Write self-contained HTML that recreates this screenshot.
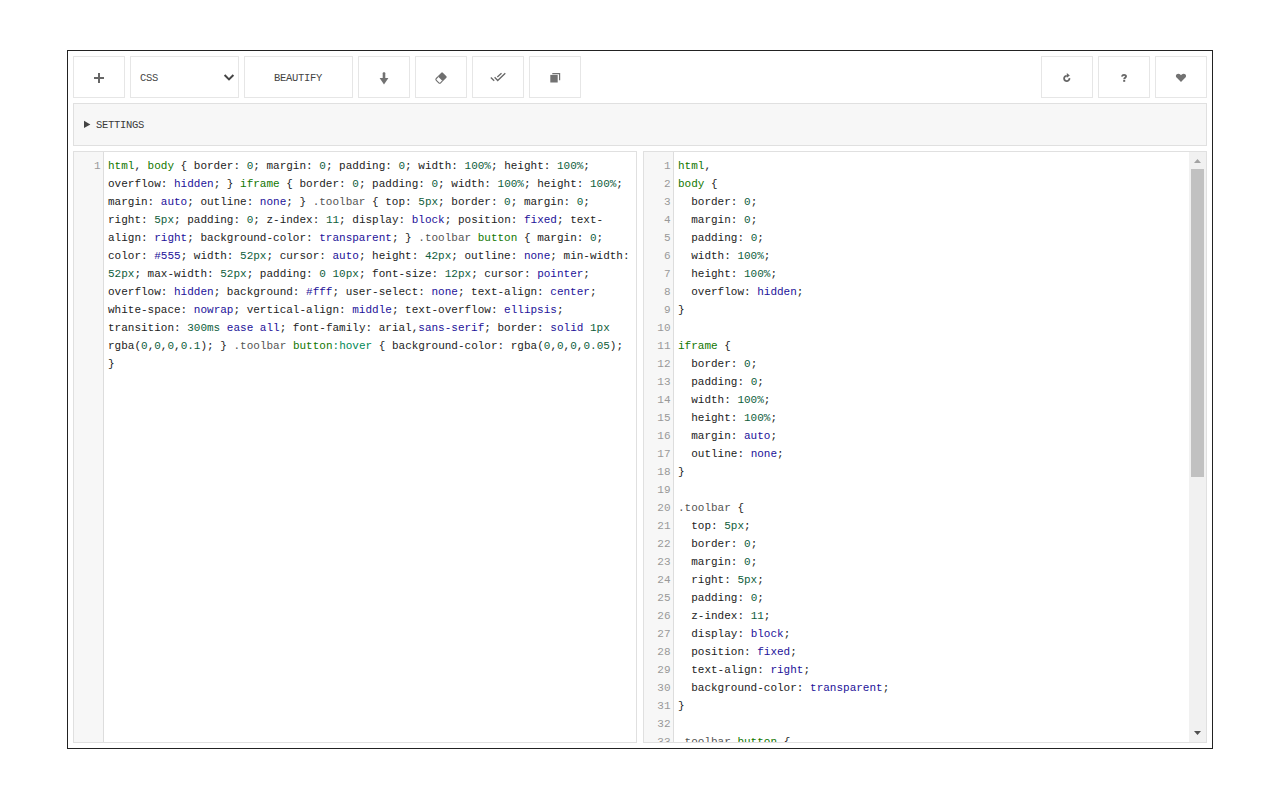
<!DOCTYPE html>
<html><head><meta charset="utf-8">
<style>
html,body{margin:0;padding:0;background:#fff;width:1280px;height:800px;overflow:hidden;position:relative;}
*{box-sizing:border-box;}
.abs{position:absolute;}
#wrap{position:absolute;left:67px;top:50px;width:1146px;height:699px;border:1px solid #222;}
.btn{position:absolute;top:56px;height:42px;border:1px solid #e6e6e6;background:#fff;}
.btxt{position:absolute;font-family:"Liberation Mono",monospace;font-size:10.5px;letter-spacing:-0.3px;color:#444;white-space:pre;line-height:12px;}
#settings{position:absolute;left:73px;top:103px;width:1134px;height:43px;background:#f7f7f7;border:1px solid #e0e0e0;}
.ed{position:absolute;top:151px;width:564px;height:592px;border:1px solid #e0e0e0;background:#fff;overflow:hidden;}
.gut{position:absolute;left:0;top:0;width:30px;height:100%;background:#f7f7f7;border-right:1px solid #ddd;}
.code{position:absolute;font-family:"Liberation Mono",monospace;font-size:11px;line-height:18px;white-space:pre;color:#222;}
.nums{position:absolute;left:0;width:26.5px;text-align:right;font-family:"Liberation Mono",monospace;font-size:11px;line-height:18px;color:#999;}
.ln,.gn{height:18px;}
.t{color:#170}.q{color:#555}.v{color:#085}.n{color:#0f5e3c}.a{color:#219}
#sb{position:absolute;left:545px;top:0;width:17px;height:590px;background:#f1f1f1;}
#thumb{position:absolute;left:2px;top:17px;width:13px;height:308px;background:#c1c1c1;}
svg.ov{position:absolute;left:0;top:0;width:1280px;height:800px;pointer-events:none;}
</style></head><body>
<div id="wrap"></div>
<div class="btn" style="left:73px;width:52px"></div>
<div class="btn" style="left:130px;width:109px"></div>
<div class="btn" style="left:244px;width:109px"></div>
<div class="btn" style="left:358px;width:52px"></div>
<div class="btn" style="left:415px;width:52px"></div>
<div class="btn" style="left:472px;width:52px"></div>
<div class="btn" style="left:529px;width:52px"></div>
<div class="btn" style="left:1041px;width:52px"></div>
<div class="btn" style="left:1098px;width:52px"></div>
<div class="btn" style="left:1155px;width:52px"></div>
<div class="btxt" style="left:140px;top:72px">CSS</div>
<div class="btxt" style="left:274px;top:72px">BEAUTIFY</div>
<div id="settings"></div>
<div class="btxt" style="left:96px;top:119px;color:#3a3a3a">SETTINGS</div>

<div class="ed" style="left:73px">
  <div class="gut"></div>
  <div class="nums" style="top:5px"><div class="gn">1</div></div>
  <div class="code" style="left:34px;top:5px"><div class="ln"><span class="t">html</span>, <span class="t">body</span> { border: <span class="n">0</span>; margin: <span class="n">0</span>; padding: <span class="n">0</span>; width: <span class="n">100%</span>; height: <span class="n">100%</span>;</div><div class="ln">overflow: <span class="a">hidden</span>; } <span class="t">iframe</span> { border: <span class="n">0</span>; padding: <span class="n">0</span>; width: <span class="n">100%</span>; height: <span class="n">100%</span>;</div><div class="ln">margin: <span class="a">auto</span>; outline: <span class="a">none</span>; } <span class="q">.toolbar</span> { top: <span class="n">5px</span>; border: <span class="n">0</span>; margin: <span class="n">0</span>;</div><div class="ln">right: <span class="n">5px</span>; padding: <span class="n">0</span>; z-index: <span class="n">11</span>; display: <span class="a">block</span>; position: <span class="a">fixed</span>; text-</div><div class="ln">align: <span class="a">right</span>; background-color: <span class="a">transparent</span>; } <span class="q">.toolbar</span> <span class="t">button</span> { margin: <span class="n">0</span>;</div><div class="ln">color: <span class="a">#555</span>; width: <span class="n">52px</span>; cursor: <span class="a">auto</span>; height: <span class="n">42px</span>; outline: <span class="a">none</span>; min-width:</div><div class="ln"><span class="n">52px</span>; max-width: <span class="n">52px</span>; padding: <span class="n">0</span> <span class="n">10px</span>; font-size: <span class="n">12px</span>; cursor: <span class="a">pointer</span>;</div><div class="ln">overflow: <span class="a">hidden</span>; background: <span class="a">#fff</span>; user-select: <span class="a">none</span>; text-align: <span class="a">center</span>;</div><div class="ln">white-space: <span class="a">nowrap</span>; vertical-align: <span class="a">middle</span>; text-overflow: <span class="a">ellipsis</span>;</div><div class="ln">transition: <span class="n">300ms</span> <span class="a">ease</span> <span class="a">all</span>; font-family: arial,<span class="a">sans-serif</span>; border: <span class="a">solid</span> <span class="n">1px</span></div><div class="ln">rgba(<span class="n">0</span>,<span class="n">0</span>,<span class="n">0</span>,<span class="n">0.1</span>); } <span class="q">.toolbar</span> <span class="t">button</span><span class="v">:hover</span> { background-color: rgba(<span class="n">0</span>,<span class="n">0</span>,<span class="n">0</span>,<span class="n">0.05</span>);</div><div class="ln">}</div></div>
</div>
<div class="ed" style="left:643px">
  <div class="gut"></div>
  <div class="nums" style="top:5px"><div class="gn">1</div><div class="gn">2</div><div class="gn">3</div><div class="gn">4</div><div class="gn">5</div><div class="gn">6</div><div class="gn">7</div><div class="gn">8</div><div class="gn">9</div><div class="gn">10</div><div class="gn">11</div><div class="gn">12</div><div class="gn">13</div><div class="gn">14</div><div class="gn">15</div><div class="gn">16</div><div class="gn">17</div><div class="gn">18</div><div class="gn">19</div><div class="gn">20</div><div class="gn">21</div><div class="gn">22</div><div class="gn">23</div><div class="gn">24</div><div class="gn">25</div><div class="gn">26</div><div class="gn">27</div><div class="gn">28</div><div class="gn">29</div><div class="gn">30</div><div class="gn">31</div><div class="gn">32</div><div class="gn">33</div><div class="gn">34</div></div>
  <div class="code" style="left:34px;top:5px"><div class="ln"><span class="t">html</span>,</div><div class="ln"><span class="t">body</span> {</div><div class="ln">  border: <span class="n">0</span>;</div><div class="ln">  margin: <span class="n">0</span>;</div><div class="ln">  padding: <span class="n">0</span>;</div><div class="ln">  width: <span class="n">100%</span>;</div><div class="ln">  height: <span class="n">100%</span>;</div><div class="ln">  overflow: <span class="a">hidden</span>;</div><div class="ln">}</div><div class="ln">&nbsp;</div><div class="ln"><span class="t">iframe</span> {</div><div class="ln">  border: <span class="n">0</span>;</div><div class="ln">  padding: <span class="n">0</span>;</div><div class="ln">  width: <span class="n">100%</span>;</div><div class="ln">  height: <span class="n">100%</span>;</div><div class="ln">  margin: <span class="a">auto</span>;</div><div class="ln">  outline: <span class="a">none</span>;</div><div class="ln">}</div><div class="ln">&nbsp;</div><div class="ln"><span class="q">.toolbar</span> {</div><div class="ln">  top: <span class="n">5px</span>;</div><div class="ln">  border: <span class="n">0</span>;</div><div class="ln">  margin: <span class="n">0</span>;</div><div class="ln">  right: <span class="n">5px</span>;</div><div class="ln">  padding: <span class="n">0</span>;</div><div class="ln">  z-index: <span class="n">11</span>;</div><div class="ln">  display: <span class="a">block</span>;</div><div class="ln">  position: <span class="a">fixed</span>;</div><div class="ln">  text-align: <span class="a">right</span>;</div><div class="ln">  background-color: <span class="a">transparent</span>;</div><div class="ln">}</div><div class="ln">&nbsp;</div><div class="ln"><span class="q">.toolbar</span> <span class="t">button</span> {</div><div class="ln">  margin: <span class="n">0</span>;</div></div>
  <div id="sb"><div id="thumb"></div></div>
</div>

<svg class="ov" viewBox="0 0 1280 800">
 <g fill="#666">
  <rect x="94" y="77" width="10" height="2"/>
  <rect x="98" y="73" width="2" height="10"/>
 </g>
 <polyline points="224.6,75 229,79.4 233.4,75" fill="none" stroke="#444" stroke-width="2"/>
 <g fill="#727272">
  <rect x="382.7" y="72.2" width="2.6" height="7" rx="1"/>
  <polygon points="379.6,78.1 388.4,78.1 384,84.4"/>
 </g>
 <g transform="translate(441 78.1) rotate(-45)">
  <path d="M-1,-3.6 H4 Q5.1,-3.6 5.1,-2.5 V2.5 Q5.1,3.6 4,3.6 H-1 Z" fill="#6f6f6f"/>
  <path d="M-1,-3.05 H-3.6 Q-4.9,-3.05 -4.9,-1.8 V1.8 Q-4.9,3.05 -3.6,3.05 H-1" fill="none" stroke="#6f6f6f" stroke-width="1.1"/>
 </g>
 <g fill="none" stroke="#666" stroke-width="1.3">
  <polyline points="490.8,77.5 494.2,80.8"/>
  <polyline points="494.6,77.3 497.7,80.5 505.3,73.2"/>
  <polyline points="497.3,77 501.5,73.3"/>
 </g>
 <path d="M552.3,73.6 H559.6 V80.3" fill="none" stroke="#727272" stroke-width="1.2"/>
 <rect x="550.3" y="74.9" width="7.4" height="7.6" fill="#727272"/>
 <path d="M1066.75,75.85 A2.65,2.65 0 1 0 1069.36,78.04" fill="none" stroke="#666" stroke-width="1.8"/>
 <polygon points="1066.8,73 1069.8,75.6 1066.8,77.8" fill="#666"/>
 <path d="M1122.2,76.6 C1122.0,74.4 1126.1,74.3 1126.0,76.4 C1125.9,77.8 1124.2,77.7 1124.2,79.2" fill="none" stroke="#666" stroke-width="1.9"/>
 <rect x="1123.2" y="80" width="2" height="1.8" fill="#666"/>
 <path d="M1181,82 L1176.6,77.6 C1175.4,76.4 1175.7,73.8 1178.3,73.7 C1179.6,73.7 1180.5,74.5 1181,75.2 C1181.5,74.5 1182.4,73.7 1183.7,73.7 C1186.3,73.8 1186.6,76.4 1185.4,77.6 Z" fill="#727272"/>
 <polygon points="84,120.8 90.4,124.4 84,128" fill="#444"/>
 <polygon points="1194,163 1201,163 1197.5,159" fill="#a3a3a3"/>
 <polygon points="1194,731 1201,731 1197.5,735" fill="#505050"/>
</svg>
</body></html>
